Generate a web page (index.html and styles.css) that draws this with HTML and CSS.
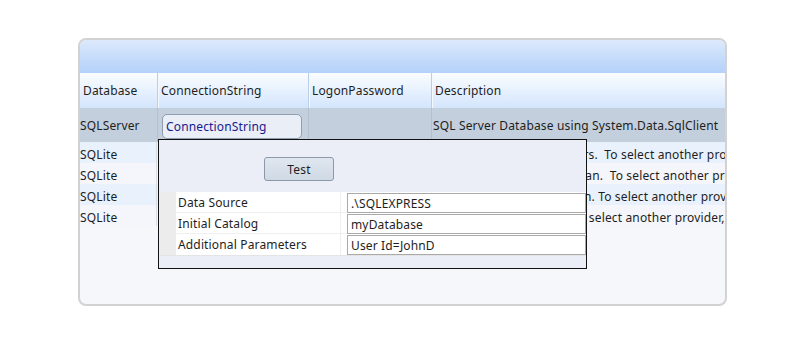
FILE: index.html
```html
<!DOCTYPE html>
<html>
<head>
    <title>Connection Strings</title>
    <link rel="stylesheet" href="styles.css">
</head>
<body>
    <div class="panel">
        <div class="titlebar"></div>
        <div class="grid">
            <div class="row head">
                <div class="cell">Database</div>
                <div class="cell">ConnectionString</div>
                <div class="cell">LogonPassword</div>
                <div class="cell">Description</div>
            </div>
            <div class="row selected">
                <div class="cell">SQLServer</div>
                <div class="cell"><div class="editbox">ConnectionString</div></div>
                <div class="cell"></div>
                <div class="cell">SQL Server Database using System.Data.SqlClient</div>
            </div>
            <div class="row odd">
                <div class="cell">SQLite</div>
                <div class="cell"></div>
                <div class="cell"></div>
                <div class="cell">SQLite Database to all users.&nbsp; To select another provider, change the Database column.</div>
            </div>
            <div class="row even">
                <div class="cell">SQLite</div>
                <div class="cell"></div>
                <div class="cell"></div>
                <div class="cell">SQLite Database, fit and lean.&nbsp; To select another provider, change the Database column.</div>
            </div>
            <div class="row odd">
                <div class="cell">SQLite</div>
                <div class="cell"></div>
                <div class="cell"></div>
                <div class="cell">SQLite Database, in session. To select another provider, change the Database column.</div>
            </div>
            <div class="row even">
                <div class="cell">SQLite</div>
                <div class="cell"></div>
                <div class="cell"></div>
                <div class="cell">SQLite Database, static. To select another provider, change the Database column.</div>
            </div>
        </div>

        <div class="popup">
            <button class="test-btn">Test</button>
            <div class="props">
                <div class="prop">
                    <div class="prop-name">Data Source</div>
                    <div class="prop-value"><div class="prop-input">.\SQLEXPRESS</div></div>
                </div>
                <div class="prop">
                    <div class="prop-name">Initial Catalog</div>
                    <div class="prop-value"><div class="prop-input">myDatabase</div></div>
                </div>
                <div class="prop">
                    <div class="prop-name">Additional Parameters</div>
                    <div class="prop-value"><div class="prop-input">User Id=JohnD</div></div>
                </div>
            </div>
        </div>
    </div>
</body>
</html>
```

FILE: styles.css
```css
body {
    margin: 0;
    background: white;
    font-family: "Noto Sans", "Open Sans", sans-serif;
    font-size: 12px;
    letter-spacing: 0.15px;
    color: #1e1e1e;
}

.panel {
    position: relative;
    box-sizing: border-box;
    width: 649px;
    height: 268px;
    margin: 38px 0 0 78px;
    border: 2px solid #d2d2d2;
    border-radius: 8px;
    background: #f5f7fb;
    overflow: hidden;
}

.titlebar {
    height: 33px;
    background: linear-gradient(#dce9fc, #b3d1fa);
}

.row {
    display: grid;
    grid-template-columns: 77px 151px 123px 1fr;
    white-space: nowrap;
}

.cell {
    display: flex;
    align-items: center;
    overflow: hidden;
    box-sizing: border-box;
}

.head {
    height: 35px;
    background: linear-gradient(#fbfdff, #d3e5fc);
}

.head .cell {
    padding-left: 3px;
    border-left: 1px solid #b9cfe9;
    box-shadow: inset 1px 0 0 #f4f9ff;
}

.head .cell:first-child {
    border-left: none;
    box-shadow: none;
}

.selected {
    height: 34px;
    background: #c3cfdc;
}

.selected .cell {
    border-left: 1px solid #b3c0cf;
    padding-left: 1px;
}

.selected .cell:first-child {
    border-left: none;
    padding-left: 0;
}

.editbox {
    box-sizing: border-box;
    width: 140px;
    height: 25px;
    margin: 3px 0 0 3px;
    padding-left: 3px;
    display: flex;
    align-items: center;
    border: 1px solid #8f9db0;
    border-radius: 5px;
    background: #e9eef7;
    color: #1a1a8e;
}

.odd,
.even {
    height: 21px;
}

.odd .cell,
.even .cell {
    align-items: flex-start;
    line-height: 16px;
    padding-top: 5px;
}

.odd {
    background: #e9f1fc;
}

.even {
    background: #f4f6fb;
}

.odd .cell:first-child,
.even .cell:first-child {
    border-right: 1px solid #d6dde8;
}

.odd .cell:last-child,
.even .cell:last-child {
    padding-left: 2px;
}

.popup {
    position: absolute;
    left: 78px;
    top: 99px;
    box-sizing: border-box;
    width: 429px;
    height: 130px;
    border: 1px solid #111;
    background: #ebeef6;
    padding: 17px 0 0 1px;
}

.test-btn {
    display: block;
    box-sizing: border-box;
    width: 70px;
    height: 24px;
    margin-left: 104px;
    border: 1px solid #8d99a9;
    border-radius: 3px;
    background: linear-gradient(#dfe6ef, #cfd9e5);
    font-family: inherit;
    font-size: 12px;
    letter-spacing: inherit;
    color: #1e1e1e;
    padding: 0;
}

.props {
    margin-top: 11px;
    padding-left: 16px;
    background: #ececec;
    border-bottom: 1px solid #e4e4e4;
}

.prop {
    display: grid;
    grid-template-columns: 165px 1fr;
    height: 21px;
    background: white;
    border-bottom: 1px solid #efefef;
    box-sizing: border-box;
}

.prop:last-child {
    border-bottom: none;
}

.prop-name {
    display: flex;
    align-items: center;
    padding-left: 2px;
    border-right: 1px solid #efefef;
}

.prop-value {
    padding: 1px 0 0 6px;
}

.prop-input {
    box-sizing: border-box;
    height: 20px;
    display: flex;
    align-items: center;
    padding-left: 3px;
    border: 1px solid #a9a9a9;
    background: white;
}
```
